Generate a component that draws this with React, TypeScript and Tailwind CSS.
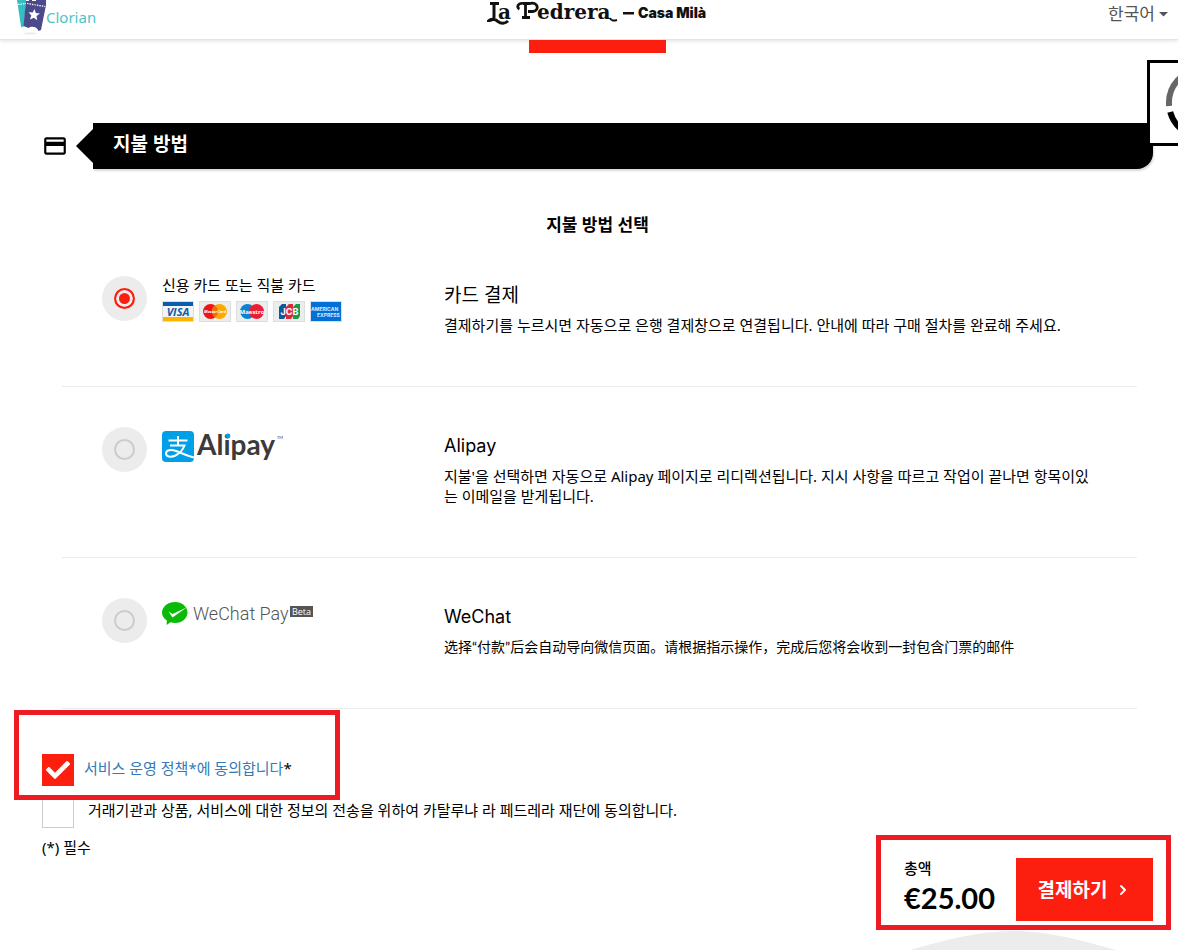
import { useState } from 'react'
import { MdCreditCard } from 'react-icons/md'
import { FaCheck } from 'react-icons/fa'
import { ChevronRight } from 'lucide-react'

function ClorianLogo() {
  return (
    <a href="#" className="flex items-end pl-4 text-[15px] leading-5 text-[#4dc3c6] font-['Noto_Sans']">
      <svg width="30" height="35" viewBox="0 0 30 35" aria-hidden="true">
        <ellipse cx="14" cy="33.500" rx="7" ry="1.200" fill="#ececf2" />
        <path d="M1 0h9l-2 26-2 1.500-1-1z" fill="#35bfc2" />
        <path d="M10 0h21l-6 30-2.500 1c-1-4-7-5.500-10-3l-5-2z" fill="#4a4a8c" />
        <path d="M2 4.500l8-1M11 3.500l18 3" stroke="#fff" strokeWidth="1.200" strokeDasharray="1.500 1" />
        <path d="M18.500 9l1.300 4 4.200.6-3.500 2.400.7 4.200-3.300-2.500-4 1.800 1.400-4-2.800-3.200 4.200.1z" fill="#fff" />
        <path d="M10 0h3M16 0h4" stroke="#fff" strokeWidth="2" />
      </svg>
      <span className="pb-2">Clorian</span>
    </a>
  )
}

function PedreraLogo() {
  return (
    <svg width="221" height="28" viewBox="0 0 221 28" role="img" aria-label="La Pedrera – Casa Milà" fill="#111">
      <path d="M3 3.500h9M7 3.500v14c0 2-3 3-5 3 2-2 6-1.500 9 1 3 2.300 7 2.300 10-.5" fill="none" stroke="#111" strokeWidth="3" />
      <text x="11" y="19" fontSize="20" fontWeight="700" fontFamily="DejaVu Serif">a</text>
      <path d="M36 3.500h7c8-2 10 7 3 8h-5M38.500 3.500v14M35 17.500h8M36 3.500c-5-1-7 4-3.500 5.500" fill="none" stroke="#111" strokeWidth="2.800" />
      <text x="50" y="19" fontSize="20" fontWeight="700" fontFamily="DejaVu Serif">edrera</text>
      <path d="M123 18c1 3 4 3 7 2" fill="none" stroke="#111" strokeWidth="2" />
      <path d="M136 12h11v2.500h-11z" />
      <text x="151" y="18" fontSize="14" fontWeight="900" fontFamily="Inter">Casa Milà</text>
    </svg>
  )
}

function CardBrands() {
  const frame = <rect x=".5" y=".5" width="31" height="20" fill="#e9edec" stroke="#dedede" />
  return (
    <div className="flex gap-[5px]">
      <svg width="32" height="21" viewBox="0 0 32 21" role="img" aria-label="Visa">
        <rect x=".5" y=".5" width="31" height="20" fill="#f4f4f4" stroke="#dedede" />
        <path d="M1 1h30v4H1z" fill="#0b5cab" />
        <path d="M1 16h30v4H1z" fill="#fab500" />
        <text x="16" y="14.500" textAnchor="middle" fontSize="11" fontWeight="700" fontStyle="italic" fontFamily="Open Sans" fill="#0b5cab">VISA</text>
      </svg>
      <svg width="32" height="21" viewBox="0 0 32 21" role="img" aria-label="MasterCard">
        {frame}
        <circle cx="11.500" cy="10.500" r="7.500" fill="#f01414" />
        <circle cx="20.500" cy="10.500" r="7.500" fill="#ffa800" />
        <path d="M16 4.500a7.500 7.500 0 0 1 0 12 7.500 7.500 0 0 1 0-12" fill="#f56a0a" />
        <text x="16" y="12" textAnchor="middle" fontSize="4" fontWeight="700" fontStyle="italic" fontFamily="Open Sans" fill="#fff">MasterCard</text>
      </svg>
      <svg width="32" height="21" viewBox="0 0 32 21" role="img" aria-label="Maestro">
        {frame}
        <circle cx="11.500" cy="10.500" r="7.500" fill="#0b83d0" />
        <circle cx="20.500" cy="10.500" r="7.500" fill="#ed1c35" />
        <text x="16" y="12.500" textAnchor="middle" fontSize="6" fontWeight="700" fontFamily="Open Sans" fill="#fff">Maestro</text>
      </svg>
      <svg width="32" height="21" viewBox="0 0 32 21" role="img" aria-label="JCB">
        {frame}
        <path d="M9 3h4v12l-2 3H6V6z" fill="#10589e" />
        <path d="M16 3h4v12l-2 3h-5V6z" fill="#dc2b35" />
        <path d="M23 3h4v12l-2 3h-5V6z" fill="#1c9a45" />
        <text x="16.500" y="13.500" textAnchor="middle" fontSize="9" fontWeight="700" fontFamily="Inter" fill="#fff">JCB</text>
      </svg>
      <svg width="32" height="21" viewBox="0 0 32 21" role="img" aria-label="American Express">
        <rect x=".5" y=".5" width="31" height="20" fill="#0070d8" stroke="#dedede" />
        <text x="1" y="9.500" fontSize="5" fontWeight="700" fontFamily="Inter" fill="#dcecff">AMERICAN</text>
        <text x="7" y="16" fontSize="5" fontWeight="700" fontFamily="Inter" fill="#dcecff">EXPRESS</text>
      </svg>
    </div>
  )
}

function AlipayLogo() {
  return (
    <svg className="mt-1 overflow-visible" width="124" height="38" viewBox="0 0 124 38" role="img" aria-label="Alipay">
      <rect width="32" height="31" rx="4" fill="#00a0e9" />
      <path d="M6.500 9.500h19M16 5v9M8 14.500h14.500c-1.500 4-5 8-9 10-5 2.300-9.500 1-9.500-2 0-3.500 5-4.500 10-2.500 6 2.300 11 5 18 6.500" fill="none" stroke="#fff" strokeWidth="2" />
      <text x="35" y="24" fontSize="28" fontWeight="700" fontFamily="Lato" fill="#3e3a39">Alipay</text>
      <circle cx="66" cy="5" r="2.400" fill="#00a0e9" />
      <text x="115" y="8" fontSize="4" fontFamily="Lato" fill="#3e3a39">TM</text>
    </svg>
  )
}

function WeChatLogo() {
  return (
    <svg className="mt-1" width="152" height="26" viewBox="0 0 152 26" role="img" aria-label="WeChat Pay Beta">
      <path d="M13 0c7 0 12.500 4.700 12.500 10.500S20 21 13 21c-1.600 0-3-.2-4.400-.7L4.500 23l.4-4.400C2 16.700 0 13.800 0 10.500 0 4.700 6 0 13 0z" fill="#09bb07" />
      <path d="M6.500 9.500l4 2.500L24.500 5.500 10.500 15.500z" fill="#fff" />
      <text x="31" y="18" fontSize="18" fontWeight="300" fontFamily="Roboto" fill="#555">WeChat Pay</text>
      <path d="M128 4h23v11h-23z" fill="#555" />
      <text x="139.500" y="12.500" textAnchor="middle" fontSize="9" fontFamily="Open Sans" fill="#fff">Beta</text>
    </svg>
  )
}

const METHODS = [
  {
    id: 'card',
    label: '신용 카드 또는 직불 카드',
    logo: <CardBrands />,
    title: '카드 결제',
    text: '결제하기를 누르시면 자동으로 은행 결제창으로 연결됩니다. 안내에 따라 구매 절차를 완료해 주세요.',
    titleClass: 'text-[19px]',
    textClass: 'text-[15px]',
  },
  {
    id: 'alipay',
    logo: <AlipayLogo />,
    title: 'Alipay',
    text: "지불'을 선택하면 자동으로 Alipay 페이지로 리디렉션됩니다. 지시 사항을 따르고 작업이 끝나면 항목이있는 이메일을 받게됩니다.",
    titleClass: "text-[18px] font-['Inter',sans-serif]",
    textClass: 'text-[15px]',
  },
  {
    id: 'wechat',
    logo: <WeChatLogo />,
    title: 'WeChat',
    text: '选择“付款”后会自动导向微信页面。请根据指示操作，完成后您将会收到一封包含门票的邮件',
    titleClass: "text-[18px] font-['Inter',sans-serif]",
    textClass: "text-sm leading-5 font-['Lato','Noto_Sans_CJK_SC',sans-serif]",
  },
]

interface TickProps {
  id: string
  checked: boolean
  onChange: (value: boolean) => void
}

function Tick({ id, checked, onChange }: TickProps) {
  return (
    <span className="relative size-8 shrink-0">
      <input
        id={id}
        type="checkbox"
        checked={checked}
        onChange={(e) => onChange(e.target.checked)}
        className="block size-8 appearance-none border border-[#ccc] bg-white checked:border-[#fc1f10] checked:bg-[#fc1f10]"
      />
      {checked && <FaCheck size={24} className="pointer-events-none absolute top-1 left-1 text-white" />}
    </span>
  )
}

export default function App() {
  const [method, setMethod] = useState('card')
  const [terms, setTerms] = useState(true)
  const [consent, setConsent] = useState(false)

  return (
    <div className="min-h-screen overflow-hidden bg-white text-[15px] leading-5 text-black font-['Noto_Sans','Noto_Sans_CJK_KR',sans-serif]">
      <header className="grid h-10 grid-cols-3 items-end overflow-hidden border-b border-[#e3e3e3] shadow-[0_1px_4px_rgba(0,0,0,0.12)]">
        <div className="flex h-10 items-start"><ClorianLogo /></div>
        <div className="flex h-10 items-start justify-center pl-[18px]"><PedreraLogo /></div>
        <div className="flex h-10 items-start justify-end pr-[10px]">
          <button className="flex items-center gap-1 pt-1 text-[17px] leading-5 text-[#555]">
            한국어
            <svg width="9" height="5" viewBox="0 0 9 5" fill="#555"><path d="M0 0h9L4.500 4.500z" /></svg>
          </button>
        </div>
      </header>

      <div className="fixed top-[60px] right-0 h-[86px] w-[31px] overflow-hidden border-y-[3px] border-l-[3px] border-black bg-white">
        <svg width="80" height="80" viewBox="0 0 80 80" fill="none" strokeWidth="6" className="max-w-none">
          <path d="M19.100 43A34 34 0 0 1 53 6" stroke="#666" />
          <path d="M20.200 49A34 34 0 0 0 53 74" stroke="#000" />
        </svg>
      </div>

      <main className="pr-[25px] pl-[42px]">
        <div className="mx-auto h-[13px] w-[137px] bg-[#fc1f10]" />

        <div className="mt-[70px] flex items-center">
          <MdCreditCard size={26} className="shrink-0" />
          <svg width="17" height="34" viewBox="0 0 17 34" className="ml-2 shrink-0"><path d="M17 0v34L0 17z" /></svg>
          <h1 className="flex-1 rounded-br-2xl bg-black px-5 pt-2 pb-3 text-[19px] leading-[26px] font-bold text-white shadow-[1px_2px_2px_rgba(0,0,0,0.15)]">
            지불 방법
          </h1>
        </div>

        <h2 className="mt-11 mb-[-1px] text-center text-[17px] leading-6 font-bold">지불 방법 선택</h2>

        <div className="mr-4 ml-5">
          {METHODS.map((m) => (
            <div key={m.id} className="flex border-b border-[#ececec] px-10 pt-10 pb-[51px]">
              <div className="flex size-[45px] shrink-0 items-center justify-center rounded-full bg-[#ececec]">
                <input
                  id={m.id}
                  type="radio"
                  name="method"
                  checked={method === m.id}
                  onChange={() => setMethod(m.id)}
                  className="size-[21px] appearance-none rounded-full border-2 border-[#ccc] checked:border-[#fc1f10] checked:bg-[#fc1f10] checked:shadow-[inset_0_0_0_3px_#ececec]"
                />
              </div>
              <label htmlFor={m.id} className="ml-[15px] flex h-[46px] w-[282px] shrink-0 flex-col gap-[7px]">
                {m.label && <span className="leading-[18px]">{m.label}</span>}
                {m.logo}
              </label>
              <div className="flex-1 pt-[6px]">
                <h3 className={`mb-[7px] leading-[26px] ${m.titleClass}`}>{m.title}</h3>
                <p className={m.textClass}>{m.text}</p>
              </div>
            </div>
          ))}
        </div>

        <div className="relative mt-[45px] flex w-fit gap-[10px]">
          <Tick id="terms" checked={terms} onChange={setTerms} />
          <label htmlFor="terms" className="pt-1">
            <a href="#" className="text-[#337ab7]">서비스 운영 정책*에 동의합니다</a>*
          </label>
          <div className="pointer-events-none absolute -top-11 -left-7 z-10 h-[90px] w-[326px] border-[5px] border-[#ed1c24]" />
        </div>
        <div className="mt-[10px] flex gap-[14px]">
          <Tick id="consent" checked={consent} onChange={setConsent} />
          <label htmlFor="consent" className="pt-1">
            거래기관과 상품, 서비스에 대한 정보의 전송을 위하여 카탈루냐 라 페드레라 재단에 동의합니다.
          </label>
        </div>
        <p className="mt-[9px]">(*) 필수</p>

        <div className="relative mt-px ml-auto flex w-fit gap-[21px]">
          <div>
            <div className="font-medium">총액</div>
            <div className="text-[29px] leading-10 font-bold font-['Lato',sans-serif]">€25.00</div>
          </div>
          <button className="flex h-[63px] w-[137px] items-center justify-center gap-2 bg-[#fc1f10] text-[19px] font-bold text-white">
            결제하기
            <ChevronRight size={16} strokeWidth={3} />
          </button>
          <div className="pointer-events-none absolute -top-[23px] -right-[18px] -bottom-[9px] -left-7 border-[5px] border-[#ed1c24]" />
        </div>
      </main>

      <footer className="mt-[10px] flex justify-end pr-[62px]">
        <svg width="206" height="19" viewBox="0 0 206 19" fill="#ececec"><path d="M0 19C36 9 68 0 103 0s67 9 103 19z" /></svg>
      </footer>
    </div>
  )
}
